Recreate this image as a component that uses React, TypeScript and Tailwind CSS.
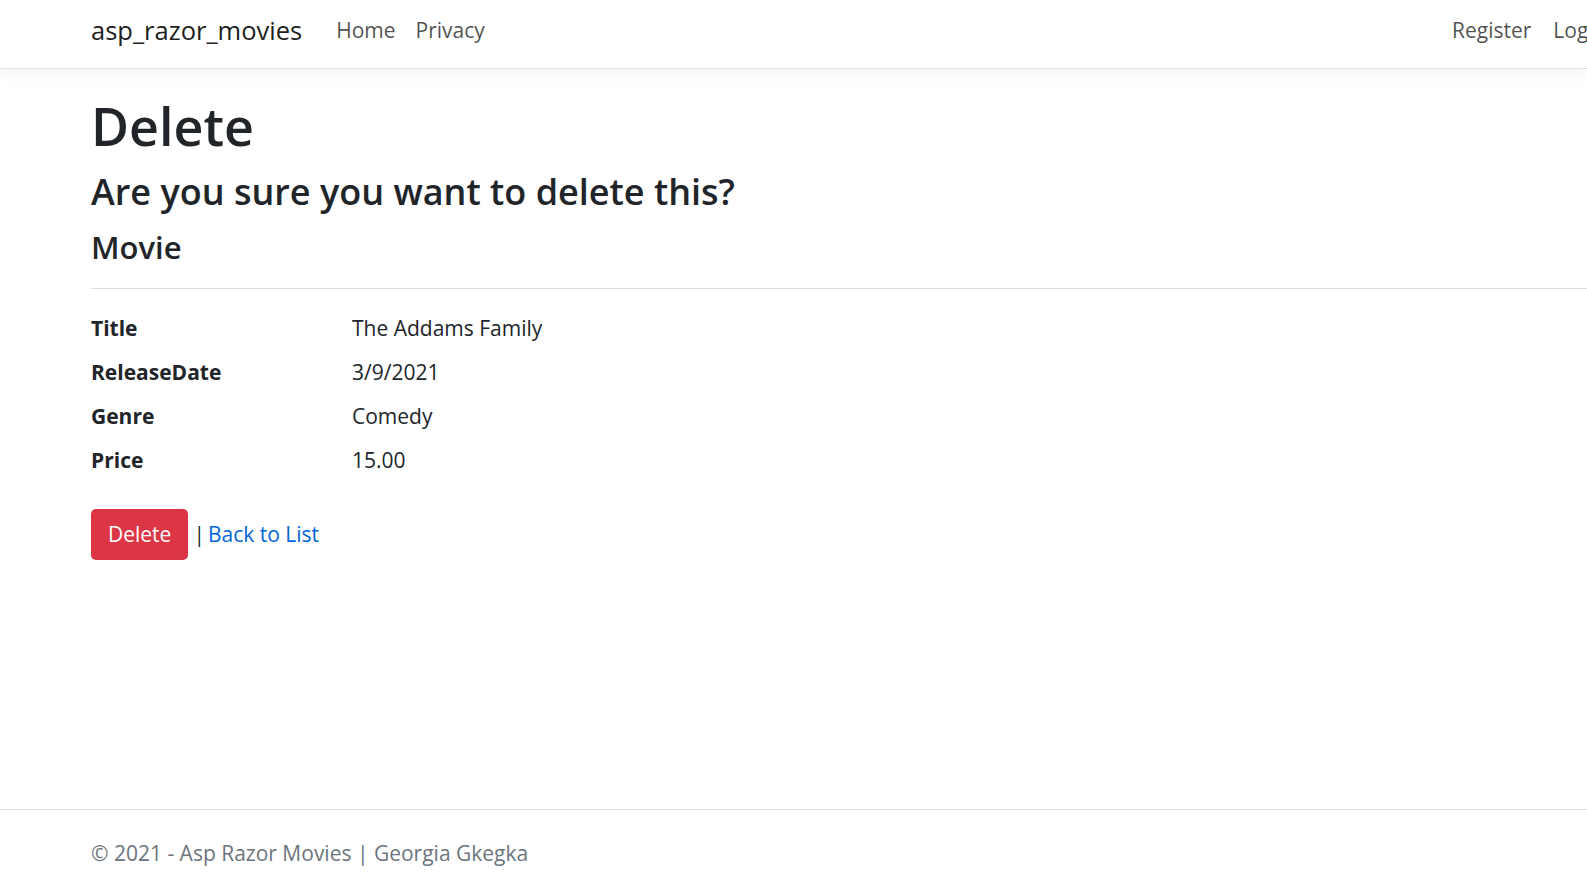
export default function App() {
  return (
    <div className="flex h-screen flex-col overflow-hidden bg-white font-['Open_Sans',sans-serif] text-[21px] text-[#212529]">
      <header className="relative z-10 h-[69px] shrink-0 border-b border-[#dee2e6] bg-white shadow-[0_5px_15px_rgba(0,0,0,0.05)]">
        <nav className="grid h-full grid-cols-[1361px_auto] items-center whitespace-nowrap pb-[7px] pl-[91px]">
          <div className="flex items-center">
            <a className="text-[25.5px] text-black/90">asp_razor_movies</a>
            <ul className="ml-[24px] flex items-center">
              <li className="px-[10px] text-black/70">Home</li>
              <li className="px-[10px] text-black/70">Privacy</li>
            </ul>
          </div>
          <ul className="flex items-center gap-[22px] text-black/70">
            <li>Register</li>
            <li>Login</li>
          </ul>
        </nav>
      </header>

      <main className="flex-1 pt-[26px]">
        <div className="pl-[91px]">
          <h1 className="text-[52px] font-semibold leading-[1.2]">Delete</h1>
          <h3 className="mt-[13px] text-[36px] font-semibold leading-[1.2]">
            Are you sure you want to delete this?
          </h3>
          <h4 className="mt-[15px] text-[31px] font-semibold leading-[1.2]">Movie</h4>
        </div>
        <div className="ml-[91px] mt-[22px] border-t border-[#dedede]" />
        <dl className="mt-[24px] grid grid-cols-[261px_1fr] gap-y-[14px] pl-[91px] leading-[30px]">
          <dt className="font-bold">Title</dt>
          <dd>The Addams Family</dd>
          <dt className="font-bold">ReleaseDate</dt>
          <dd>3/9/2021</dd>
          <dt className="font-bold">Genre</dt>
          <dd>Comedy</dd>
          <dt className="font-bold">Price</dt>
          <dd>15.00</dd>
        </dl>
        <div className="mt-[34px] flex items-center pl-[91px]">
          <button className="h-[51px] rounded-[5px] bg-[#dc3545] px-[17px] text-white">Delete</button>
          <span className="ml-[5px]">|</span>
          <a className="ml-[3px] text-[#0366d6]">Back to List</a>
        </div>
      </main>

      <footer className="h-[77px] shrink-0 border-t border-[#dee2e6] pl-[91px] leading-[86px] text-[#6c757d]">
        © 2021 - Asp Razor Movies | Georgia Gkegka
      </footer>
    </div>
  )
}
